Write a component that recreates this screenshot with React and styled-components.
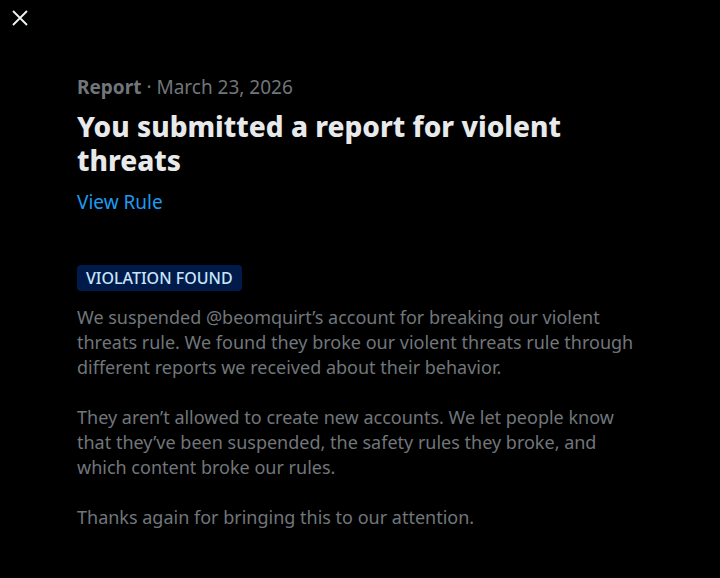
import React from "react";
import styled, { createGlobalStyle } from "styled-components";

const Global = createGlobalStyle`
  html, body { margin: 0; padding: 0; background: #000; }
  body { font-family: "Segoe UI", "Noto Sans", "Open Sans", sans-serif; }
`;

const Page = styled.div`
  min-height: 578px;
  background: #000;
  position: relative;
`;

const CloseButton = styled.button`
  position: absolute;
  top: 2px;
  left: 4px;
  width: 32px;
  height: 32px;
  border: none;
  background: transparent;
  padding: 0;
  display: flex;
  align-items: center;
  justify-content: center;
  cursor: pointer;
`;

const Content = styled.main`
  padding: 75px 77px 0 77px;
  display: flex;
  flex-direction: column;
  align-items: flex-start;
`;

const Meta = styled.div`
  font-size: 19px;
  line-height: 25px;
  color: #71767b;
`;

const MetaStrong = styled.span`
  font-weight: 700;
`;

const Title = styled.h1`
  margin: 9px 0 0 0;
  font-size: 28px;
  line-height: 34px;
  font-weight: 800;
  color: #e7e9ea;
  max-width: 520px;
`;

const Link = styled.a`
  margin-top: 13px;
  font-size: 19px;
  line-height: 25px;
  color: #1d9bf0;
  text-decoration: none;
`;

const Badge = styled.span`
  margin-top: 50px;
  background: #001a4a;
  color: #c8e6fb;
  font-size: 16px;
  line-height: 26px;
  padding: 0 9px;
  border-radius: 4px;
  font-weight: 500;
`;

const Body = styled.div`
  margin-top: 14px;
  font-size: 18px;
  line-height: 25px;
  color: #71767b;
  max-width: 570px;
`;

const Para = styled.p`
  margin: 0 0 25px 0;
`;

export default function App() {
  return (
    <Page>
      <Global />
      <CloseButton aria-label="Close">
        <svg width="20" height="20" viewBox="0 0 20 20">
          <path d="M3 3 L17 17 M17 3 L3 17" stroke="#eff3f4" strokeWidth="1.8" />
        </svg>
      </CloseButton>
      <Content>
        <Meta>
          <MetaStrong>Report</MetaStrong> · March 23, 2026
        </Meta>
        <Title>You submitted a report for violent threats</Title>
        <Link href="#">View Rule</Link>
        <Badge>VIOLATION FOUND</Badge>
        <Body>
          <Para>
            We suspended @beomquirt’s account for breaking our violent threats rule. We found they broke our violent threats rule through different reports we received about their behavior.
          </Para>
          <Para>
            They aren’t allowed to create new accounts. We let people know that they’ve been suspended, the safety rules they broke, and which content broke our rules.
          </Para>
          <Para>Thanks again for bringing this to our attention.</Para>
        </Body>
      </Content>
    </Page>
  );
}
